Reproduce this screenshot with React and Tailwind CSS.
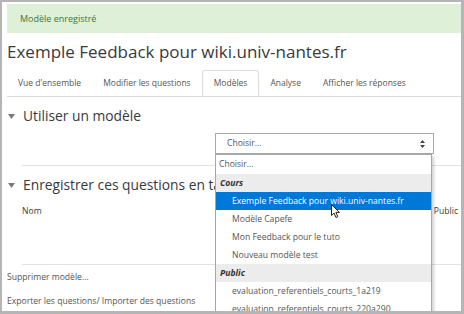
import React from "react";

const font = { fontFamily: '"Open Sans", "Noto Sans", sans-serif' };

function Caret() {
  return (
    <svg width="7" height="5" viewBox="0 0 7 5" className="shrink-0">
      <path d="M0 0 L7 0 L3.5 5 Z" fill="#7a7a7a" />
    </svg>
  );
}

function Item({ children, active }) {
  return (
    <div
      className={
        "h-[18px] flex items-center pl-[16px] text-[8.6px] whitespace-nowrap " +
        (active ? "bg-[#0078d7] text-white" : "text-[#555]")
      }
    >
      {children}
    </div>
  );
}

function Group({ children }) {
  return (
    <div className="h-[18px] flex items-center pl-[4px] text-[8.6px] font-bold italic text-[#333] bg-[#ececec]">
      {children}
    </div>
  );
}

export default function App() {
  return (
    <div
      className="w-[464px] h-[314px] bg-[#b5b5b5] pl-[2px] pt-[2px] pr-[3px] pb-[3px]"
      style={font}
    >
      <div className="relative w-full h-full bg-white overflow-hidden">
        <div className="ml-[5px] mt-[2px] h-[29px] bg-[#dff0d8] flex items-center pl-[13px] text-[9px] text-[#3c763d]">
          Modèle enregistré
        </div>
        <h1 className="ml-[5px] mt-[7px] text-[17px] leading-[24px] text-[#373a3c] whitespace-nowrap">
          Exemple Feedback pour wiki.univ-nantes.fr
        </h1>
        <div className="ml-[5px] mt-[6px] flex border-b border-[#dcdcdc] text-[8.5px] text-[#555]">
          <div className="px-[11px] h-[26px] flex items-center">Vue d'ensemble</div>
          <div className="px-[11px] h-[26px] flex items-center">Modifier les questions</div>
          <div className="px-[11px] h-[26px] flex items-center border border-[#dcdcdc] border-b-white rounded-t-[3px] -mb-px bg-white">
            Modèles
          </div>
          <div className="px-[11px] h-[26px] flex items-center">Analyse</div>
          <div className="px-[11px] h-[26px] flex items-center">Afficher les réponses</div>
        </div>

        <div className="mt-[9px] flex items-center gap-[8px] pl-[6px] h-[20px]">
          <Caret />
          <span className="text-[13.8px] text-[#373a3c] leading-[20px]">Utiliser un modèle</span>
        </div>
        <div className="mt-[7px] ml-[213px] w-[219px] h-[21px] border border-[#a8a8a8] flex items-center justify-between pl-[11px] pr-[8px] text-[8.6px] text-[#555]">
          <span>Choisir...</span>
          <svg width="5" height="8" viewBox="0 0 5 8">
            <path d="M0 3 L2.5 0 L5 3 Z M0 5 L2.5 8 L5 5 Z" fill="#444" />
          </svg>
        </div>
        <div className="mt-[11px] ml-[20px] border-t border-[#e2e2e2]" />

        <div className="mt-[9px] flex items-center gap-[8px] pl-[6px] h-[20px]">
          <Caret />
          <span className="text-[13.8px] text-[#373a3c] leading-[20px] whitespace-nowrap">
            Enregistrer ces questions en tant que nouveau modèle
          </span>
        </div>
        <div className="mt-[9px] ml-[20px] flex justify-between pr-[3px] text-[8.6px] text-[#373a3c] h-[14px] items-center">
          <span>Nom</span>
          <span>Public</span>
        </div>
        <div className="mt-[46px] ml-[20px] border-t border-[#e2e2e2]" />
        <div className="mt-[5px] ml-[5px] h-[14px] flex items-center text-[8.6px] text-[#555]">
          Supprimer modèle...
        </div>
        <div className="mt-[10px] ml-[5px] h-[14px] flex items-center text-[8.6px] text-[#555] whitespace-nowrap">
          Exporter les questions/ Importer des questions
        </div>

        <div className="absolute left-[213px] top-[152px] w-[217px] h-[180px] bg-white border border-[#a8a8a8] shadow-[2px_2px_3px_rgba(0,0,0,0.18)]">
          <div className="h-[19px] flex items-center pl-[3px] text-[8.6px] text-[#555]">Choisir...</div>
          <Group>Cours</Group>
          <Item active>Exemple Feedback pour wiki.univ-nantes.fr</Item>
          <Item>Modèle Capefe</Item>
          <Item>Mon Feedback pour le tuto</Item>
          <Item>Nouveau modèle test</Item>
          <Group>Public</Group>
          <Item>evaluation_referentiels_courts_1a219</Item>
          <Item>evaluation_referentiels_courts_220a290</Item>
        </div>

        <svg
          className="absolute left-[329px] top-[202px]"
          width="10"
          height="15"
          viewBox="0 0 10 15"
        >
          <path
            d="M0.5 0.5 L0.5 11.5 L3 9 L5 13.5 L6.8 12.7 L4.9 8.4 L8.5 8.4 Z"
            fill="white"
            stroke="#222"
            strokeWidth="1"
            strokeLinejoin="round"
          />
        </svg>
      </div>
    </div>
  );
}
